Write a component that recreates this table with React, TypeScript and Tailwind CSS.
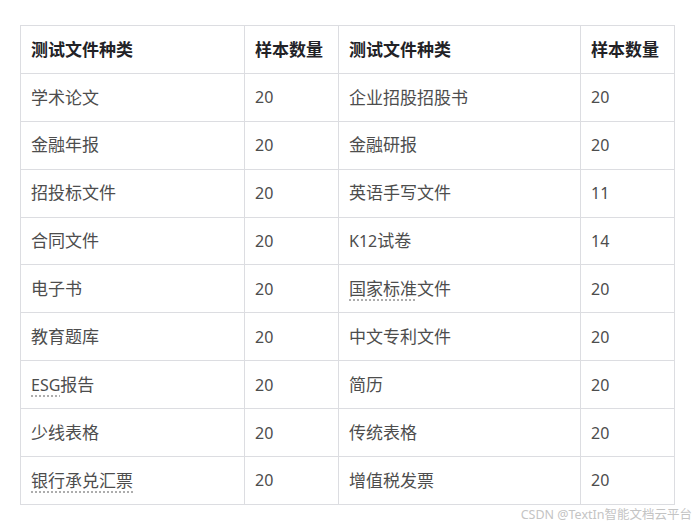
import React from "react";

const cjk = (s: string) =>
  s.split(/([\u4e00-\u9fff]+)/).filter(Boolean).map((p, i) =>
    /[\u4e00-\u9fff]/.test(p) ? (
      <span key={i} className="text-[17px]">{p}</span>
    ) : (
      <span key={i}>{p}</span>
    )
  );

const U = ({ children }: { children: React.ReactNode }) => (
  <span className="underline decoration-dotted decoration-[#999] underline-offset-[5px]">{children}</span>
);

const rows: [React.ReactNode, string, React.ReactNode, string][] = [
  [cjk("学术论文"), "20", cjk("企业招股招股书"), "20"],
  [cjk("金融年报"), "20", cjk("金融研报"), "20"],
  [cjk("招投标文件"), "20", cjk("英语手写文件"), "11"],
  [cjk("合同文件"), "20", cjk("K12试卷"), "14"],
  [cjk("电子书"), "20", <><U>{cjk("国家标准")}</U>{cjk("文件")}</>, "20"],
  [cjk("教育题库"), "20", cjk("中文专利文件"), "20"],
  [<><U>ESG</U>{cjk("报告")}</>, "20", cjk("简历"), "20"],
  [cjk("少线表格"), "20", cjk("传统表格"), "20"],
  [<U>{cjk("银行承兑汇票")}</U>, "20", cjk("增值税发票"), "20"],
];

export default function App() {
  const font = { fontFamily: '"Noto Sans", "Noto Sans CJK SC", sans-serif' };
  return (
    <div className="w-[699px] h-[529px] bg-white relative" style={font}>
      <div className="pt-[25px] pl-[20px]">
        <table className="border-collapse w-[654px] table-fixed text-[16px]">
          <colgroup>
            <col className="w-[224px]" />
            <col className="w-[94px]" />
            <col className="w-[242px]" />
            <col className="w-[94px]" />
          </colgroup>
          <thead>
            <tr className="h-[47.9px]">
              {["测试文件种类", "样本数量", "测试文件种类", "样本数量"].map((h, i) => (
                <th
                  key={i}
                  className="border border-[#dcdde1] px-[10px] text-left font-bold text-[#222226] align-middle whitespace-nowrap"
                >
                  {cjk(h)}
                </th>
              ))}
            </tr>
          </thead>
          <tbody>
            {rows.map((r, i) => (
              <tr key={i} className="h-[47.9px]">
                {r.map((c, j) => (
                  <td
                    key={j}
                    className="border border-[#dcdde1] px-[10px] text-left text-[#4d4d4d] align-middle whitespace-nowrap"
                  >
                    {c}
                  </td>
                ))}
              </tr>
            ))}
          </tbody>
        </table>
      </div>
      <div className="flex justify-end pr-[7px] pt-[2px]">
        <span className="text-[12.5px] text-[#c4c4c4] leading-[16px]">CSDN @TextIn智能文档云平台</span>
      </div>
    </div>
  );
}
